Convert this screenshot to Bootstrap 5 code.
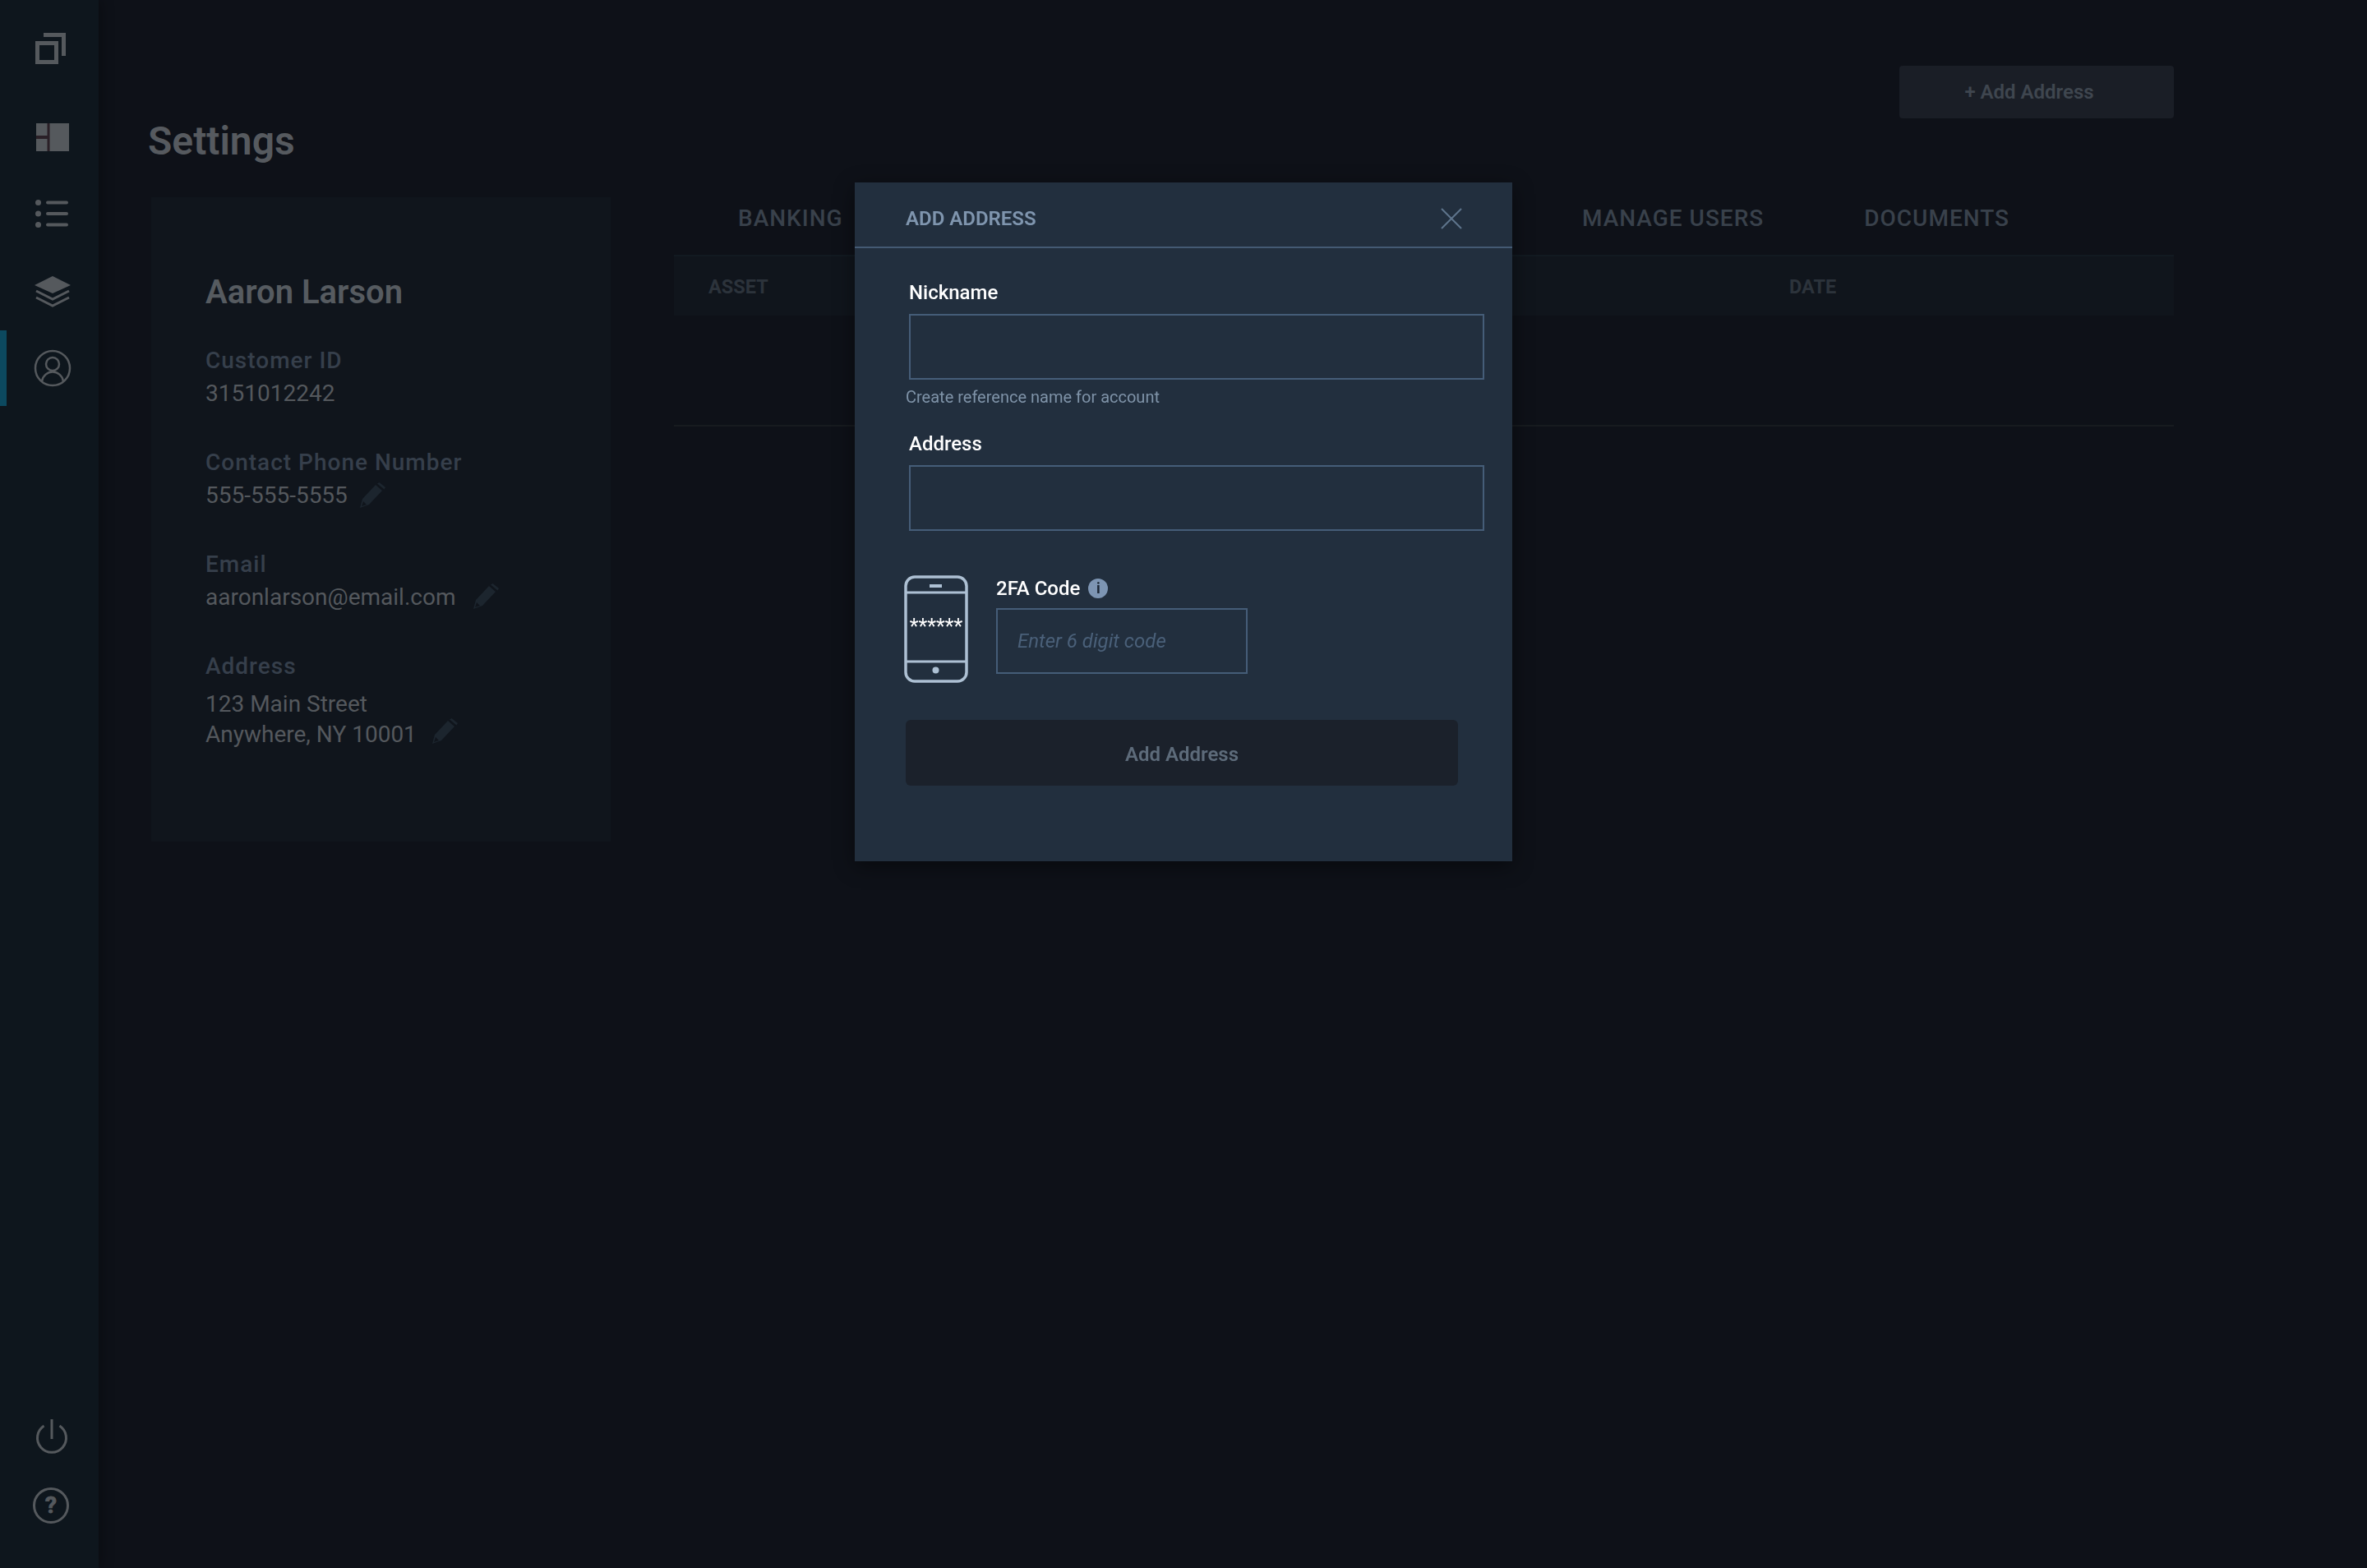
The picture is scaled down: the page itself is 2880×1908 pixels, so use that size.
<!DOCTYPE html>
<html lang="en">
<head>
<meta charset="utf-8">
<title>Settings</title>
<link href="https://cdn.jsdelivr.net/npm/bootstrap@5.3.0/dist/css/bootstrap.min.css" rel="stylesheet">
<style>
html,body{height:100%}
body{background:#0e1118;font-family:Roboto,"Liberation Sans",sans-serif;overflow:hidden}
.side-rail{width:120px;background:#0e161d;box-shadow:4px 0 14px rgba(0,0,0,.28);position:relative;z-index:1;flex:none}
.side-rail svg{width:48px;height:48px;overflow:visible;display:block}
.rail-item{display:flex;align-items:center;padding-left:40px}
.rail-logo{height:118px}.rail-dash{height:98px}.rail-list{height:88px}.rail-layers{height:84px;margin-bottom:14px}
.rail-user{height:92px;border-left:8px solid #0c495f;padding-left:32px}
.rail-power,.rail-help{height:82px}
.rail-end{padding-bottom:35px}
.ink{fill:#55595d}
.line{fill:none;stroke:#55595d}
.main-pane{padding:80px 235px 0 60px;min-width:0}
.page-title{font-size:48px;font-weight:600;color:#565a5f;line-height:56px;margin:64px 0 0}
.add-top{width:334px;height:64px;background:#1a1e26;border:0;border-radius:4px;color:#3f464f;font-size:24px;font-weight:600;padding:0 18px 0 0}
.content-row{margin-top:40px;gap:77px}
.profile-box{width:559px;height:784px;margin-left:4px;background:#10151c;border:0;border-radius:0;padding:92px 66px 0;flex:none}
.profile-name{font-size:40px;font-weight:600;color:#565b60;line-height:48px;margin:0 0 42px}
.field-label{font-size:28px;color:#363f4b;letter-spacing:1px;line-height:34px;font-weight:500}
.field-value{font-size:28px;color:#54585d;line-height:36px;margin-top:5px}
.field-group{margin-bottom:49px}
.val-row{display:flex;align-items:center}
.pen{width:31px;height:31px;fill:#1c252e;flex:none;margin-left:15px;margin-bottom:1px}
.pen-mail{margin-left:22px;margin-bottom:3px}
.pen-addr{margin-left:19px;margin-bottom:9px}
.addr-value{margin-top:12px;line-height:34px}
.tabs-pane{flex:1;min-width:0}
.tab-bar{padding:0 200px 18px 78px;height:70px;align-items:center;flex-wrap:nowrap}
.tab-bar .nav-link{padding:0;font-size:28px;letter-spacing:1px;color:#39414b;font-weight:500}
.tab-last{margin-left:122px}
.grid-table{--bs-table-bg:transparent;margin:0;table-layout:fixed}
.grid-table th{background:#10151c;border:0;border-top:2px solid #121a21;font-size:23.5px;font-weight:700;color:#2c333b;height:73px;vertical-align:middle;padding:4px 0 0 42px}
.grid-table th+th{padding-left:0}
.grid-table th:first-child{width:1357px}
.grid-table td{height:134px;background:transparent;border-bottom:2px solid #171b1f;padding:0}
.dialog-wide{max-width:800px;margin:222px auto 0}
.dialog-box{background:#222f3e;border:0;border-radius:0;box-shadow:0 6px 24px rgba(0,0,0,.45);height:826px}
.dialog-head{height:80px;padding:10px 62px 0 62px;border-bottom:2px solid #445a73;border-radius:0}
.dialog-title{font-size:24px;font-weight:600;color:#7f95ae;margin:0;line-height:28px}
.x-btn{background:none;border:0;padding:0;width:26px;height:26px;display:block;margin-right:-1px}
.x-btn svg{display:block}
.dialog-main{padding:38px 66px 0 62px}
.form-cap{font-size:24px;line-height:32px;color:#fff;margin:0 0 10px 4px;display:block;font-weight:500}
.box-input{height:80px;border:2px solid #455d78;border-radius:0;background:transparent;color:#fff;font-size:24px;margin-left:4px;width:700px;max-width:none;box-shadow:none}
.hint-text{font-size:20px;color:#7f93a8;line-height:28px;margin-top:7px}
.gap-addr{margin-top:27px}
.code-row{margin-top:54px;gap:34px;margin-left:-2px;align-items:flex-start}
.phone-pic{width:78px;height:131px;display:block;flex:none}
.code-cap{font-size:24px;line-height:32px;color:#fff;margin:0 0 8px 0;display:flex;align-items:center;gap:10px;font-weight:500}
.info-dot{width:24px;height:24px;border-radius:50%;background:#7d95b3;color:#1b2735;font-size:18px;font-weight:700;line-height:24px;text-align:center;display:block}
.code-input{height:80px;width:306px;border:2px solid #455d78;border-radius:0;background:transparent;font-size:24px;font-style:italic;padding:0 24px;color:#fff;box-shadow:none}
.code-input::placeholder{color:#4a6079;opacity:1}
.submit-btn{display:block;width:672px;height:80px;margin-top:45px;background:#1b212b;border:0;border-radius:6px;color:#5d6b7a;font-size:24px;font-weight:600;padding:3px 0 0 0}
</style>
</head>
<body>
<div class="d-flex h-100">
  <nav class="side-rail d-flex flex-column">
    <a class="rail-item rail-logo" href="#" aria-label="Home">
      <svg viewBox="0 0 48 48"><rect class="line" stroke-width="5" x="5.5" y="17.5" width="23" height="23"/><path class="line" stroke-width="5" d="M13 7.5H37.5V33"/></svg>
    </a>
    <a class="rail-item rail-dash" href="#" aria-label="Dashboard">
      <svg viewBox="0 0 48 48"><rect x="4" y="7" width="40" height="34" fill="#2a2027"/><rect class="ink" x="4" y="7" width="13.500" height="15"/><rect class="ink" x="4" y="26" width="13.500" height="15"/><rect class="ink" x="20.500" y="7" width="23.500" height="34"/></svg>
    </a>
    <a class="rail-item rail-list" href="#" aria-label="List">
      <svg viewBox="0 0 48 48"><circle class="ink" cx="6.500" cy="10.500" r="3.500"/><circle class="ink" cx="6.500" cy="24" r="3.500"/><circle class="ink" cx="6.500" cy="37.500" r="3.500"/><rect class="ink" x="16" y="8.500" width="27" height="4" rx="2"/><rect class="ink" x="16" y="22" width="27" height="4" rx="2"/><rect class="ink" x="16" y="35.500" width="27" height="4" rx="2"/></svg>
    </a>
    <a class="rail-item rail-layers" href="#" aria-label="Layers">
      <svg viewBox="0 0 48 48"><path class="ink" d="M2 25 24 14 46 25 24 35Z"/><path class="line" stroke-width="3" d="M4 32 24 42 44 32"/><path class="line" stroke-width="3" d="M4 40 24 50 44 40"/></svg>
    </a>
    <a class="rail-item rail-user" href="#" aria-label="Profile">
      <svg viewBox="0 0 48 48"><circle class="line" stroke-width="2.500" cx="24" cy="24" r="21"/><circle class="line" stroke-width="2.500" cx="24" cy="19" r="8"/><path class="line" stroke-width="2.500" d="M11 40C12 33 18 28.500 24 28.500S36 33 37 40"/></svg>
    </a>
    <div class="mt-auto rail-end">
      <a class="rail-item rail-power" href="#" aria-label="Log out">
        <svg viewBox="0 0 48 48"><path class="line" stroke-width="3" d="M13.500 9A17.500 17.500 0 1 0 32.500 9"/><path class="line" stroke-width="3" d="M23 1V25"/></svg>
      </a>
      <a class="rail-item rail-help" href="#" aria-label="Help">
        <svg viewBox="0 0 48 48"><circle class="line" stroke-width="3" cx="22" cy="24" r="20.500"/><text x="22" y="33" text-anchor="middle" font-family="Roboto" font-weight="700" font-size="28" class="ink" stroke="#55595d" stroke-width="1">?</text></svg>
      </a>
    </div>
  </nav>

  <main class="main-pane flex-grow-1">
    <div class="d-flex justify-content-between align-items-start">
      <h1 class="page-title">Settings</h1>
      <button class="btn add-top" type="button">+ Add Address</button>
    </div>
    <div class="d-flex content-row align-items-start">
      <section class="card profile-box">
        <h2 class="profile-name">Aaron Larson</h2>
        <div class="field-group"><div class="field-label">Customer ID</div><div class="field-value">3151012242</div></div>
        <div class="field-group"><div class="field-label">Contact Phone Number</div><div class="field-value val-row">555-555-5555
          <svg class="pen" viewBox="0 0 31 31"><path fill-rule="evenodd" d="M0 31 3 20 19 3 27 10 11 27ZM2 29 8 27 4 23Z"/><path d="M21 1.500 23.500 0 31 6 29.500 8.500Z"/></svg></div></div>
        <div class="field-group"><div class="field-label">Email</div><div class="field-value val-row">aaronlarson@email.com
          <svg class="pen pen-mail" viewBox="0 0 31 31"><path fill-rule="evenodd" d="M0 31 3 20 19 3 27 10 11 27ZM2 29 8 27 4 23Z"/><path d="M21 1.500 23.500 0 31 6 29.500 8.500Z"/></svg></div></div>
        <div class="field-group"><div class="field-label">Address</div>
          <div class="field-value addr-value">123 Main Street<div class="val-row">Anywhere, NY 10001
          <svg class="pen pen-addr" viewBox="0 0 31 31"><path fill-rule="evenodd" d="M0 31 3 20 19 3 27 10 11 27ZM2 29 8 27 4 23Z"/><path d="M21 1.500 23.500 0 31 6 29.500 8.500Z"/></svg></div></div></div>
      </section>
      <section class="tabs-pane">
        <ul class="nav tab-bar">
          <li class="nav-item"><a class="nav-link" href="#">BANKING</a></li>
          <li class="nav-item ms-auto"><a class="nav-link" href="#">MANAGE USERS</a></li>
          <li class="nav-item tab-last"><a class="nav-link" href="#">DOCUMENTS</a></li>
        </ul>
        <table class="table grid-table">
          <thead><tr><th>ASSET</th><th>DATE</th></tr></thead>
          <tbody><tr><td colspan="2"></td></tr></tbody>
        </table>
      </section>
    </div>
  </main>
</div>

<div class="modal d-block" tabindex="-1" role="dialog" aria-modal="true">
  <div class="modal-dialog dialog-wide">
    <div class="modal-content dialog-box">
      <div class="modal-header dialog-head">
        <h5 class="modal-title dialog-title">ADD ADDRESS</h5>
        <button class="x-btn" type="button" aria-label="Close"><svg width="26" height="26" viewBox="0 0 26 26"><path d="M1 1 25 25M25 1 1 25" fill="none" stroke="#5f758c" stroke-width="2"/></svg></button>
      </div>
      <div class="modal-body dialog-main">
        <label class="form-cap" for="nick">Nickname</label>
        <input class="form-control box-input" id="nick" type="text">
        <div class="hint-text">Create reference name for account</div>
        <label class="form-cap gap-addr" for="addr">Address</label>
        <input class="form-control box-input" id="addr" type="text">
        <div class="d-flex code-row">
          <svg class="phone-pic" viewBox="0 0 78 131"><rect x="2" y="2" width="74" height="127" rx="11" fill="none" stroke="#adc0d3" stroke-width="3.500"/><path d="M2 21H76M2 105H76" stroke="#adc0d3" stroke-width="3"/><rect x="31" y="11" width="15" height="4" fill="#adc0d3"/><circle cx="38.500" cy="115.500" r="4" fill="#adc0d3"/><text x="39" y="71" text-anchor="middle" font-family="Roboto" font-size="25" fill="#fff">******</text></svg>
          <div>
            <label class="code-cap" for="code">2FA Code <span class="info-dot">i</span></label>
            <input class="form-control code-input" id="code" type="text" placeholder="Enter 6 digit code">
          </div>
        </div>
        <button class="btn submit-btn" type="button">Add Address</button>
      </div>
    </div>
  </div>
</div>
<script src="https://cdn.jsdelivr.net/npm/bootstrap@5.3.0/dist/js/bootstrap.bundle.min.js"></script>
</body>
</html>
